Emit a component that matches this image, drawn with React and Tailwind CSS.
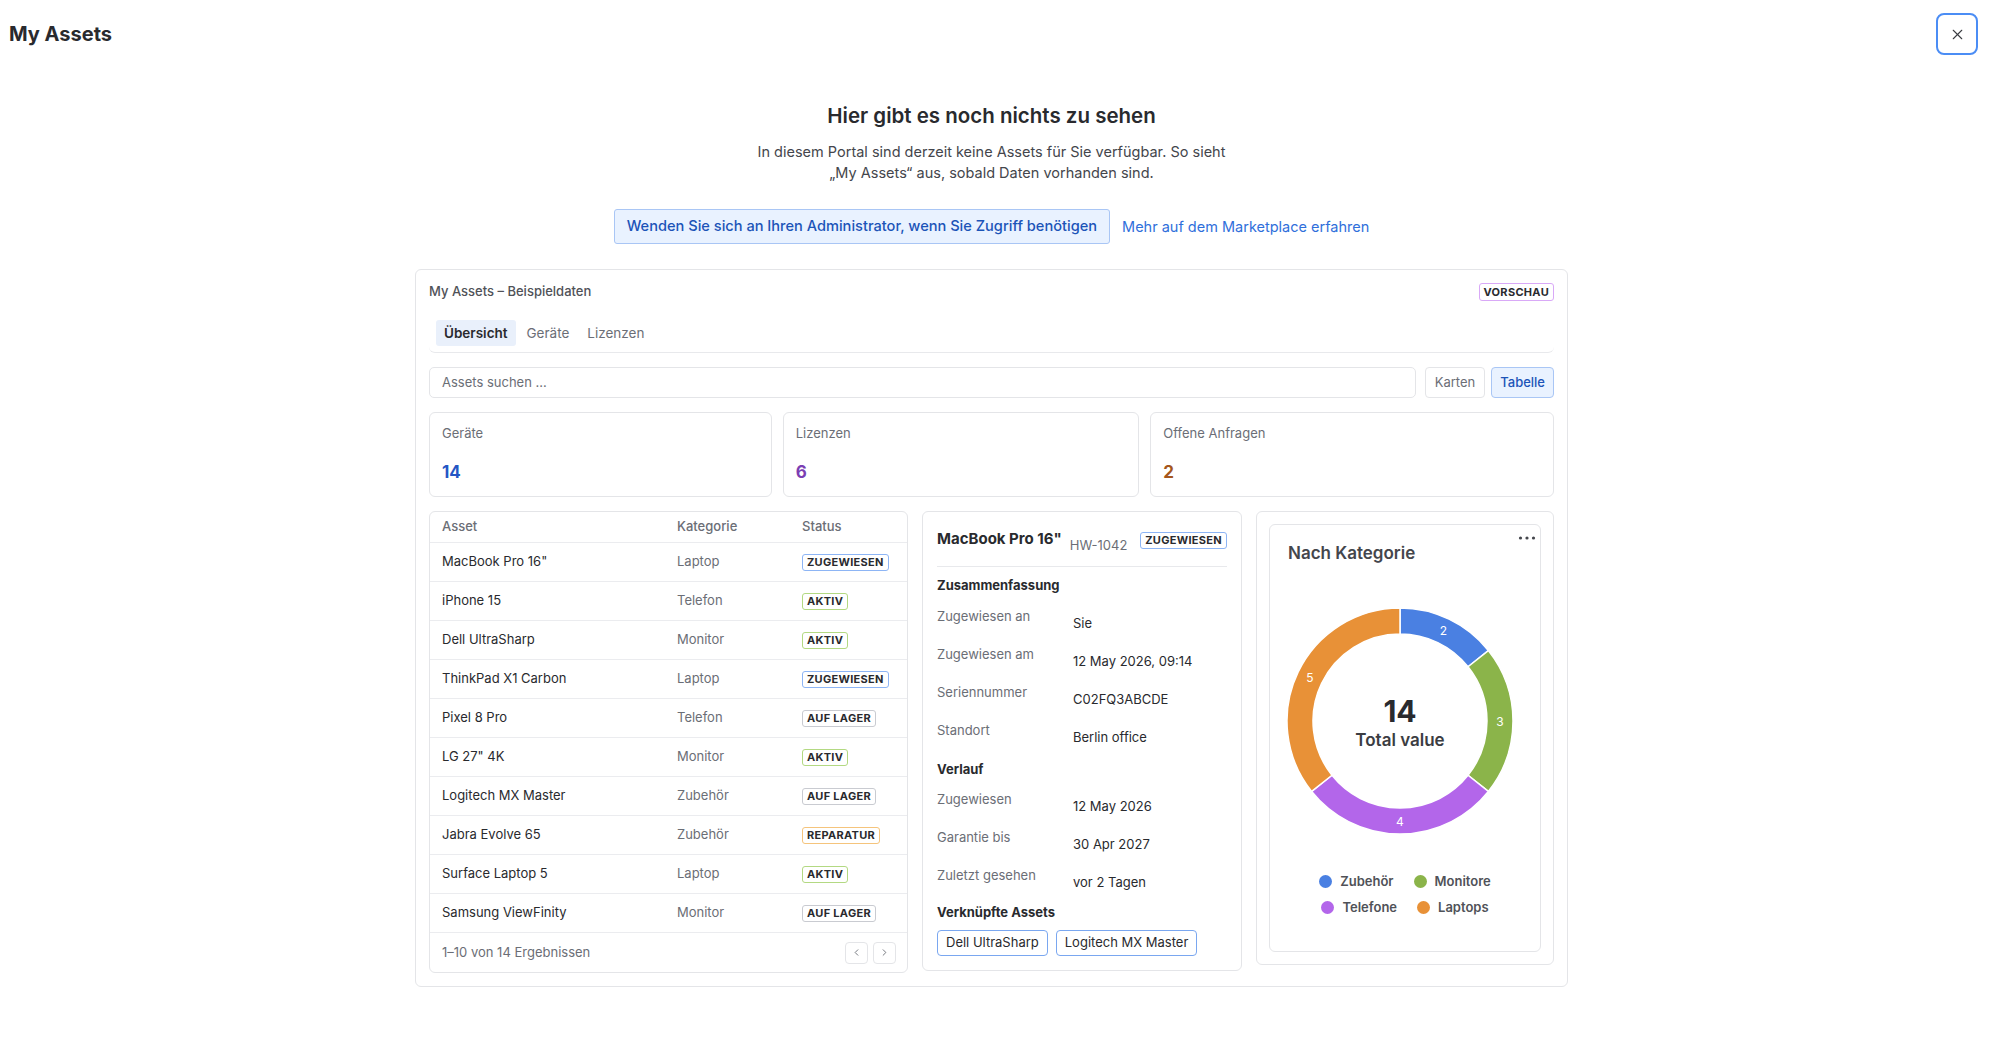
import { X, ChevronLeft, ChevronRight } from 'lucide-react'

const ROWS = [
  { name: 'MacBook Pro 16"', cat: 'Laptop', status: 'ZUGEWIESEN' },
  { name: 'iPhone 15', cat: 'Telefon', status: 'AKTIV' },
  { name: 'Dell UltraSharp', cat: 'Monitor', status: 'AKTIV' },
  { name: 'ThinkPad X1 Carbon', cat: 'Laptop', status: 'ZUGEWIESEN' },
  { name: 'Pixel 8 Pro', cat: 'Telefon', status: 'AUF LAGER' },
  { name: 'LG 27" 4K', cat: 'Monitor', status: 'AKTIV' },
  { name: 'Logitech MX Master', cat: 'Zubehör', status: 'AUF LAGER' },
  { name: 'Jabra Evolve 65', cat: 'Zubehör', status: 'REPARATUR' },
  { name: 'Surface Laptop 5', cat: 'Laptop', status: 'AKTIV' },
  { name: 'Samsung ViewFinity', cat: 'Monitor', status: 'AUF LAGER' },
]

const BADGE = {
  ZUGEWIESEN: 'border-[#8db5f5]',
  AKTIV: 'border-[#b3d982]',
  'AUF LAGER': 'border-[#c9cbd1]',
  REPARATUR: 'border-[#f5c47c]',
}

const SUMMARY = [
  ['Zugewiesen an', 'Sie'],
  ['Zugewiesen am', '12 May 2026, 09:14'],
  ['Seriennummer', 'C02FQ3ABCDE'],
  ['Standort', 'Berlin office'],
]

const HISTORY = [
  ['Zugewiesen', '12 May 2026'],
  ['Garantie bis', '30 Apr 2027'],
  ['Zuletzt gesehen', 'vor 2 Tagen'],
]

const SEGMENTS = [
  { label: 'Zubehör', value: 2, color: '#4a80e2' },
  { label: 'Monitore', value: 3, color: '#8bb44a' },
  { label: 'Telefone', value: 4, color: '#b366ea' },
  { label: 'Laptops', value: 5, color: '#e89137' },
]

function Badge({ status, className = '' }) {
  return (
    <span className={`inline-flex items-center h-[17px] px-[4px] rounded-[3px] border bg-white text-[11px] font-bold tracking-[0.3px] text-[#292a2e] ${BADGE[status]} ${className}`}>
      {status}
    </span>
  )
}

function arcPath(cx, cy, r0, r1, a0, a1) {
  const p = (r, a) => [cx + r * Math.sin(a), cy - r * Math.cos(a)]
  const large = a1 - a0 > Math.PI ? 1 : 0
  const [x0, y0] = p(r1, a0)
  const [x1, y1] = p(r1, a1)
  const [x2, y2] = p(r0, a1)
  const [x3, y3] = p(r0, a0)
  return `M${x0} ${y0} A${r1} ${r1} 0 ${large} 1 ${x1} ${y1} L${x2} ${y2} A${r0} ${r0} 0 ${large} 0 ${x3} ${y3} Z`
}

function Donut() {
  const total = SEGMENTS.reduce((s, x) => s + x.value, 0)
  let acc = 0
  return (
    <svg className="shrink-0" width="232" height="232" viewBox="0 0 232 232">
      {SEGMENTS.map((s) => {
        const a0 = (acc / total) * Math.PI * 2
        acc += s.value
        const a1 = (acc / total) * Math.PI * 2
        const mid = (a0 + a1) / 2
        return (
          <g key={s.label}>
            <path d={arcPath(116, 116, 87, 113, a0, a1)} fill={s.color} stroke="#fff" strokeWidth="1.5" />
            <text
              x={116 + 100 * Math.sin(mid)}
              y={116 - 100 * Math.cos(mid)}
              fill="#fff"
              fontSize="12"
              textAnchor="middle"
              dominantBaseline="central"
            >
              {s.value}
            </text>
          </g>
        )
      })}
      <text x="116" y="106" textAnchor="middle" dominantBaseline="central" fontSize="30" fontWeight="700" fill="#292a2e">14</text>
      <text x="116" y="135" textAnchor="middle" dominantBaseline="central" fontSize="17" fontWeight="600" fill="#3b3d42">Total value</text>
    </svg>
  )
}

function LegendItem({ s }) {
  return (
    <div className="flex items-center gap-[8px]">
      <span className="w-[13px] h-[13px] rounded-full" style={{ backgroundColor: s.color }} />
      <span className="text-[13px] font-semibold text-[#505258] leading-[18px]">{s.label}</span>
    </div>
  )
}

export default function App() {
  return (
    <div className="min-h-screen bg-white text-[#292a2e] font-['Inter',sans-serif]">
      {/* Kopfzeile */}
      <header className="flex items-center justify-between h-[68px] pl-[9px] pr-[22px]">
        <h1 className="text-[20px] font-bold leading-[24px]">My Assets</h1>
        <button className="w-[42px] h-[42px] rounded-[8px] border-2 border-[#4b8df5] flex items-center justify-center text-[#3b3d42]">
          <X size={17} strokeWidth={1.5} />
        </button>
      </header>

      <main className="pr-[17px] flex flex-col items-center">
        {/* Leerer Zustand */}
        <h2 className="mt-[36px] text-[20.5px] font-semibold leading-[24px]">Hier gibt es noch nichts zu sehen</h2>
        <p className="mt-[13px] max-w-[500px] text-center text-[14.5px] leading-[21px] text-[#44464c]">
          In diesem Portal sind derzeit keine Assets für Sie verfügbar. So sieht <br />„My Assets“ aus, sobald Daten vorhanden sind.
        </p>
        <div className="mt-[26px] flex items-center gap-[12px]">
          <button className="h-[35px] px-[12px] rounded-[3px] border border-[#a9c6f5] bg-[#e9f2ff] text-[14.6px] font-medium text-[#1c54b8]">
            Wenden Sie sich an Ihren Administrator, wenn Sie Zugriff benötigen
          </button>
          <a className="text-[14.5px] text-[#2f6fdb]">Mehr auf dem Marketplace erfahren</a>
        </div>

        {/* Vorschau */}
        <section className="mt-[25px] mb-[40px] w-[1153px] rounded-[6px] border border-[#e4e5e8] px-[13px] pt-[12px] pb-[13px]">
          <div className="flex items-center justify-between h-[20px]">
            <span className="text-[13px] font-medium text-[#505258]">My Assets – Beispieldaten</span>
            <span className="inline-flex items-center h-[18px] px-[4px] rounded-[3px] border border-[#d9a9f7] text-[11px] font-bold tracking-[0.3px]">
              VORSCHAU
            </span>
          </div>

          <div className="mt-[14px] flex items-center gap-[4px] px-[7px] pt-[4px] pb-[6px] border-b border-[#e8e9ec] rounded-b-[6px]">
            <span className="h-[26px] px-[8px] flex items-center rounded-[3px] bg-[#e9f0fb] text-[13.5px] font-semibold text-[#292a2e]">Übersicht</span>
            <span className="h-[26px] px-[7px] flex items-center text-[13.5px] text-[#6b6e76]">Geräte</span>
            <span className="h-[26px] px-[7px] flex items-center text-[13.5px] text-[#6b6e76]">Lizenzen</span>
          </div>

          <div className="mt-[14px] flex items-center">
            <div className="flex-1 h-[31px] rounded-[5px] border border-[#e4e5e8] flex items-center px-[12px] text-[13px] text-[#6b6e76]">
              Assets suchen ...
            </div>
            <button className="ml-[9px] h-[31px] px-[9px] rounded-[4px] border border-[#e4e5e8] text-[13px] text-[#6b6e76]">Karten</button>
            <button className="ml-[6px] h-[31px] px-[8px] rounded-[4px] border border-[#a9c6f5] bg-[#e9f2ff] text-[13px] font-medium text-[#1c54b8]">Tabelle</button>
          </div>

          {/* Kennzahlen */}
          <div className="mt-[14px] flex gap-[11px]">
            {[
              ['Geräte', '14', 'text-[#2456c4]'],
              ['Lizenzen', '6', 'text-[#7b3fb3]'],
              ['Offene Anfragen', '2', 'text-[#a4561c]'],
            ].map(([label, value, color]) => (
              <div key={label} className="flex-auto h-[85px] rounded-[6px] border border-[#e4e5e8] px-[12px] pt-[11px]">
                <div className="text-[13px] leading-[18px] text-[#6b6e76]">{label}</div>
                <div className={`mt-[19px] text-[17px] leading-[22px] font-bold ${color}`}>{value}</div>
              </div>
            ))}
          </div>

          {/* Unterer Bereich */}
          <div className="mt-[14px] flex items-start gap-[14px]">
            {/* Tabelle */}
            <div className="flex-1 rounded-[6px] border border-[#e4e5e8]">
              <div className="grid grid-cols-[235px_125px_1fr] items-center h-[31px] px-[12px] border-b border-[#ebecef] text-[13px] font-medium text-[#6b6e76]">
                <span>Asset</span>
                <span>Kategorie</span>
                <span>Status</span>
              </div>
              {ROWS.map((r) => (
                <div key={r.name} className="grid grid-cols-[235px_125px_1fr] items-center h-[39px] px-[12px] border-b border-[#ebecef] text-[13px]">
                  <span className="text-[#292a2e]">{r.name}</span>
                  <span className="text-[#6b6e76]">{r.cat}</span>
                  <span><Badge status={r.status} /></span>
                </div>
              ))}
              <div className="flex items-center justify-between h-[39px] pl-[12px] pr-[11px]">
                <span className="text-[13px] text-[#6b6e76]">1–10 von 14 Ergebnissen</span>
                <div className="flex gap-[5px]">
                  <button className="w-[23px] h-[22px] rounded-[4px] border border-[#e4e5e8] flex items-center justify-center text-[#6b6e76]">
                    <ChevronLeft size={11} strokeWidth={2} />
                  </button>
                  <button className="w-[23px] h-[22px] rounded-[4px] border border-[#e4e5e8] flex items-center justify-center text-[#6b6e76]">
                    <ChevronRight size={11} strokeWidth={2} />
                  </button>
                </div>
              </div>
            </div>

            {/* Details */}
            <div className="w-[320px] rounded-[6px] border border-[#e4e5e8] pl-[14px] pr-[14px] pt-[17px] pb-[14px]">
              <div className="flex items-start pb-[12px] border-b border-[#e8e9ec]">
                <span className="text-[15px] font-bold leading-[20px]">MacBook Pro 16"</span>
                <span className="ml-[8px] pt-[7px] text-[13px] leading-[18px] text-[#6b6e76]">HW-1042</span>
                <Badge status="ZUGEWIESEN" className="ml-auto mt-[3px]" />
              </div>
              <div className="mt-[8px] text-[13px] font-bold leading-[20px]">Zusammenfassung</div>
              <div className="mt-[12px]">
                {SUMMARY.map(([k, v]) => (
                  <div key={k} className="flex h-[38px] text-[13px] leading-[18px]">
                    <span className="w-[136px] text-[#6b6e76]">{k}</span>
                    <span className="mt-[7px] text-[#292a2e]">{v}</span>
                  </div>
                ))}
              </div>
              <div className="text-[13px] font-bold leading-[20px]">Verlauf</div>
              <div className="mt-[11px]">
                {HISTORY.map(([k, v]) => (
                  <div key={k} className="flex h-[38px] text-[13px] leading-[18px]">
                    <span className="w-[136px] text-[#6b6e76]">{k}</span>
                    <span className="mt-[7px] text-[#292a2e]">{v}</span>
                  </div>
                ))}
              </div>
              <div className="text-[13px] font-bold leading-[16px]">Verknüpfte Assets</div>
              <div className="mt-[10px] flex gap-[8px]">
                <button className="h-[26px] px-[8px] rounded-[4px] border border-[#7aa7f0] text-[13px]">Dell UltraSharp</button>
                <button className="h-[26px] px-[8px] rounded-[4px] border border-[#7aa7f0] text-[13px]">Logitech MX Master</button>
              </div>
            </div>

            {/* Diagramm */}
            <div className="w-[298px] rounded-[6px] border border-[#e4e5e8] p-[12px]">
              <div className="relative rounded-[6px] border border-[#e4e5e8] px-[18px] pt-[16px] pb-[35px]">
                <svg className="absolute top-[10px] right-[4px]" width="18" height="6" viewBox="0 0 18 6">
                  <circle cx="2.5" cy="3" r="1.6" fill="#44464c" />
                  <circle cx="9" cy="3" r="1.6" fill="#44464c" />
                  <circle cx="15.5" cy="3" r="1.6" fill="#44464c" />
                </svg>
                <div className="text-[17px] font-semibold leading-[24px] text-[#44464c]">Nach Kategorie</div>
                <div className="mt-[40px] mr-[10px] flex justify-center">
                  <Donut />
                </div>
                <div className="mt-[35px] flex flex-col items-center gap-[8px]">
                  <div className="flex gap-[20px]">
                    <LegendItem s={SEGMENTS[0]} />
                    <LegendItem s={SEGMENTS[1]} />
                  </div>
                  <div className="flex gap-[20px]">
                    <LegendItem s={SEGMENTS[2]} />
                    <LegendItem s={SEGMENTS[3]} />
                  </div>
                </div>
              </div>
            </div>
          </div>
        </section>
      </main>
    </div>
  )
}
